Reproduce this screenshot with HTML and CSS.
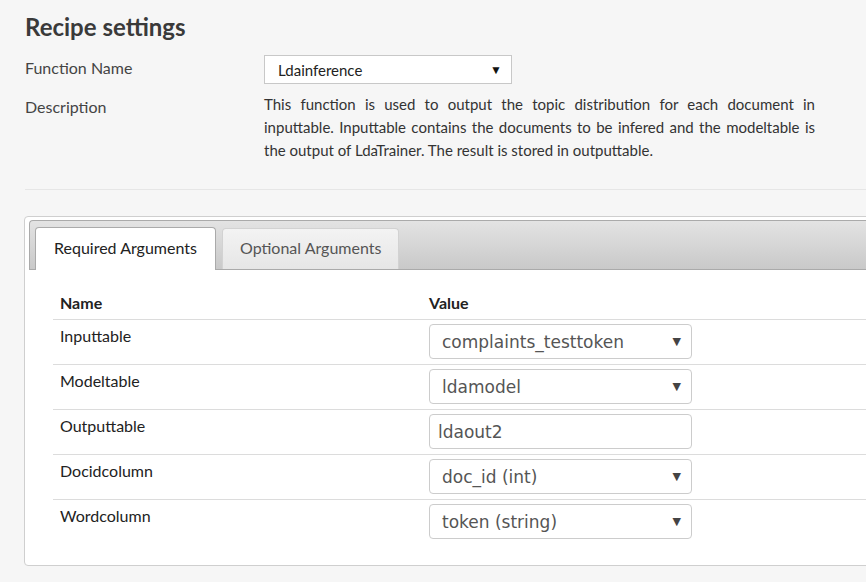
FILE: index.html
```html
<!DOCTYPE html>
<html>
<head>
<meta charset="utf-8">
<link rel="stylesheet" href="styles.css">
</head>
<body>
<div class="page">
  <h1 class="title">Recipe settings</h1>
  <div class="field field-fn">
    <div class="field-label">Function Name</div>
    <div class="fn-select"><span>Ldainference</span><span class="fn-arrow">&#9660;</span></div>
  </div>
  <div class="field field-desc">
    <div class="field-label">Description</div>
    <p class="desc">This function is used to output the topic distribution for each document in inputtable. Inputtable contains the documents to be infered and the modeltable is the output of LdaTrainer. The result is stored in outputtable.</p>
  </div>
  <div class="divider"></div>
  <div class="panel">
    <div class="tabbar">
      <div class="tab tab-active">Required Arguments</div>
      <div class="tab">Optional Arguments</div>
    </div>
    <div class="panel-body">
      <table class="args">
        <thead>
          <tr><th class="c-name">Name</th><th class="c-value">Value</th></tr>
        </thead>
        <tbody>
          <tr><td>Inputtable</td><td><div class="ctl select"><span>complaints_testtoken</span><span class="arrow">&#9660;</span></div></td></tr>
          <tr><td>Modeltable</td><td><div class="ctl select"><span>ldamodel</span><span class="arrow">&#9660;</span></div></td></tr>
          <tr><td>Outputtable</td><td><div class="ctl input"><span>ldaout2</span></div></td></tr>
          <tr><td>Docidcolumn</td><td><div class="ctl select"><span>doc_id (int)</span><span class="arrow">&#9660;</span></div></td></tr>
          <tr><td>Wordcolumn</td><td><div class="ctl select"><span>token (string)</span><span class="arrow">&#9660;</span></div></td></tr>
        </tbody>
      </table>
    </div>
  </div>
</div>
</body>
</html>
```
FILE: styles.css
```css
html, body {
  margin: 0;
  padding: 0;
}
body {
  background: #f6f6f6;
  font-family: "Lato", "Liberation Sans", sans-serif;
  color: #333;
  overflow: hidden;
  width: 866px;
  height: 582px;
}
.page {
  padding: 11px 0 0 25px;
  width: 900px;
}
.title {
  margin: 0;
  font-size: 24px;
  font-weight: 700;
  line-height: 32px;
  color: #3a3a3a;
}
.field {
  display: flex;
  align-items: flex-start;
}
.field-label {
  width: 239px;
  flex: none;
  font-size: 16px;
  line-height: 20px;
  color: #444;
}
.field-fn {
  margin-top: 12px;
}
.field-fn .field-label {
  padding-top: 3px;
}
.fn-select {
  height: 27px;
  width: 224px;
  border: 1px solid #c8c8c8;
  background: #fff;
  display: flex;
  align-items: center;
  justify-content: space-between;
  padding: 0 9px 0 13px;
  font-size: 15px;
  color: #222;
}
.fn-arrow {
  font-size: 12px;
  color: #111;
}
.field-desc {
  margin-top: 9px;
}
.field-desc .field-label {
  padding-top: 4px;
}
.desc {
  margin: 0;
  width: 551px;
  font-size: 15px;
  line-height: 23px;
  text-align: justify;
  color: #333;
}
.divider {
  height: 1px;
  background: #e6e6e6;
  margin-top: 27px;
}
.panel {
  margin-top: 26px;
  margin-left: -1px;
  border: 1px solid #cfcfcf;
  border-radius: 4px;
  background: #fff;
  padding: 3px 0 20px 4px;
}
.tabbar {
  height: 42px;
  padding: 6px 0 0 5px;
  display: flex;
  align-items: flex-end;
  gap: 6px;
  border: 1px solid #aaa;
  border-right: 0;
  border-radius: 4px 0 0 0;
  background: linear-gradient(#e3e3e3, #c9c9c9);
}
.tab {
  height: 41px;
  box-sizing: border-box;
  padding: 0 17px 3px;
  display: flex;
  align-items: center;
  font-size: 16px;
  color: #555;
  border: 1px solid #d2d2d2;
  border-bottom: 0;
  border-radius: 4px 4px 0 0;
  background: linear-gradient(#f3f3f3, #e6e6e6);
}
.tab-active {
  height: 43px;
  margin-bottom: -1px;
  background: #fff;
  border-color: #aaa;
  color: #222;
  width: 181px;
  padding-left: 18px;
  padding-bottom: 4px;
}
.panel-body {
  padding: 18px 0 0 24px;
}
.args {
  border-collapse: collapse;
  width: 100%;
}
.args th {
  text-align: left;
  font-size: 16px;
  font-weight: 700;
  color: #222;
  padding: 5px 7px 6px;
  line-height: 20px;
  border-bottom: 1px solid #dcdcdc;
}
.args .c-name {
  width: 355px;
}
.args td {
  font-size: 16px;
  line-height: 20px;
  color: #222;
  vertical-align: top;
  height: 45px;
  box-sizing: border-box;
  padding: 6px 7px 0;
  border-bottom: 1px solid #dcdcdc;
}
.args tbody tr:last-child td {
  border-bottom: 0;
}
.args td + td {
  padding-top: 4px;
}
.ctl {
  width: 263px;
  height: 35px;
  box-sizing: border-box;
  border: 1px solid #ccc;
  border-radius: 4px;
  background: #fff;
  display: flex;
  align-items: center;
  justify-content: space-between;
  font-family: "DejaVu Sans", Verdana, sans-serif;
  font-size: 17px;
  color: #555;
  padding: 0 10px 0 12px;
}
.ctl.input {
  padding-left: 8px;
}
.arrow {
  font-size: 11px;
  color: #444;
}
```
